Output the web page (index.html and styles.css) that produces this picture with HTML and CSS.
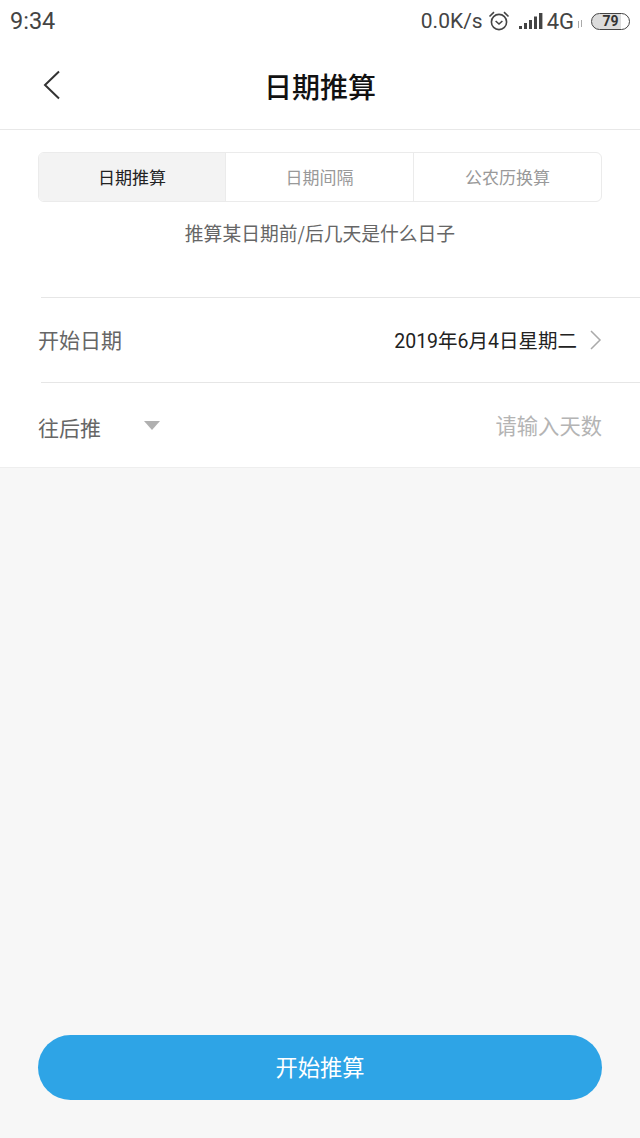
FILE: index.html
```html
<!DOCTYPE html>
<html lang="zh-CN">
<head>
    <meta charset="UTF-8">
    <meta name="viewport" content="width=device-width, initial-scale=1.0">
    <title>日期推算</title>
    <link rel="stylesheet" href="styles.css">
</head>
<body>
    <div class="page">
        <div class="status-bar">
            <span class="time">9:34</span>
            <div class="status-right">
                <span class="speed">0.0K/s</span>
                <svg class="alarm" width="22" height="22" viewBox="0 0 22 22" fill="none" stroke="#444" stroke-width="1.6">
                    <circle cx="11" cy="12" r="7.6"/>
                    <path d="M7.6 11l3.4 3 3.4-3"/>
                    <path d="M1.5 6.5L6 2.2M20.5 6.5L16 2.2"/>
                </svg>
                <svg class="signal" width="24" height="17" viewBox="0 0 24 17" fill="#444">
                    <rect x="0" y="13" width="3" height="3"/>
                    <rect x="5" y="10" width="3" height="6"/>
                    <rect x="10" y="7" width="3" height="9"/>
                    <rect x="15" y="3.5" width="3" height="12.5"/>
                    <rect x="20" y="0" width="3.4" height="16"/>
                </svg>
                <span class="net">4G</span>
                <svg class="arrows" width="6" height="8" viewBox="0 0 6 8" fill="none" stroke="#aaa" stroke-width="1">
                    <path d="M1.5 8V1M4.5 0v7"/>
                </svg>
                <div class="battery">
                    <span class="battery-level">79</span>
                </div>
            </div>
        </div>

        <header class="nav">
            <svg class="back" width="18" height="30" viewBox="0 0 18 30" fill="none" stroke="#333" stroke-width="2">
                <path d="M16 1.5L2 15l14 13.5"/>
            </svg>
            <h1>日期推算</h1>
        </header>

        <section class="panel">
            <div class="tabs">
                <div class="tab active">日期推算</div>
                <div class="tab">日期间隔</div>
                <div class="tab">公农历换算</div>
            </div>
            <p class="hint">推算某日期前/后几天是什么日子</p>

            <div class="row">
                <span class="row-label">开始日期</span>
                <div class="row-value">
                    <span class="date">2019年6月4日星期二</span>
                    <svg width="13" height="20" viewBox="0 0 13 20" fill="none" stroke="#aaa" stroke-width="1.5">
                        <path d="M2 1l9 9-9 9"/>
                    </svg>
                </div>
            </div>
            <div class="row">
                <div class="picker">
                    <span class="row-label">往后推</span>
                    <span class="caret"></span>
                </div>
                <span class="placeholder">请输入天数</span>
            </div>
        </section>

        <div class="spacer"></div>

        <div class="footer">
            <button class="submit">开始推算</button>
        </div>
    </div>
</body>
</html>
```

FILE: styles.css
```css
* {
    box-sizing: border-box;
}
body {
    margin: 0;
    font-family: "Noto Sans CJK SC", Roboto, sans-serif;
    background-color: #f7f7f7;
}
.page {
    display: flex;
    flex-direction: column;
    height: 1138px;
}
.status-bar {
    height: 42px;
    background-color: #fff;
    display: flex;
    align-items: center;
    justify-content: space-between;
    padding: 0 10px;
    color: #444;
    font-family: Roboto, sans-serif;
    font-size: 21px;
}
.time {
    font-size: 23.5px;
}
.status-right {
    display: flex;
    align-items: center;
}
.alarm {
    margin-left: 5px;
}
.signal {
    margin-left: 9px;
}
.net {
    margin-left: 4px;
    font-size: 22px;
}
.arrows {
    margin: 6px 0 0 3px;
}
.battery {
    width: 39px;
    height: 17px;
    margin-left: 8px;
    border: 1.5px solid #444;
    border-radius: 9px;
    overflow: hidden;
    background: linear-gradient(to right, #dcdcdc 79%, #fff 79%);
    display: flex;
    align-items: center;
    justify-content: center;
}
.battery-level {
    font-size: 14px;
    font-weight: 700;
    line-height: 14px;
    color: #333;
}
.nav {
    height: 88px;
    background-color: #fff;
    border-bottom: 1px solid #e8e8e8;
    display: flex;
    align-items: center;
    justify-content: center;
    position: relative;
}
.back {
    position: absolute;
    left: 43px;
    top: 28px;
}
.nav h1 {
    margin: 0;
    font-size: 28px;
    font-weight: 500;
    color: #111;
}
.panel {
    background-color: #fff;
    border-bottom: 1px solid #eeeeee;
    padding-top: 22px;
}
.tabs {
    display: flex;
    height: 50px;
    margin: 0 38px;
    border: 1px solid #ebebeb;
    border-radius: 6px;
    overflow: hidden;
}
.tab {
    flex: 1;
    display: flex;
    align-items: center;
    justify-content: center;
    padding-bottom: 2px;
    font-size: 17px;
    color: #999;
    border-right: 1px solid #ebebeb;
}
.tab:last-child {
    border-right: none;
}
.tab.active {
    flex: none;
    width: 187px;
    background-color: #f3f3f3;
    color: #222;
}
.hint {
    margin: 0;
    height: 95px;
    padding-top: 17px;
    line-height: 28px;
    text-align: center;
    font-size: 18.8px;
    color: #666;
}
.row {
    height: 85px;
    margin-left: 41px;
    padding: 0 38px 0 0;
    border-top: 1px solid #e6e6e6;
    display: flex;
    align-items: center;
    justify-content: space-between;
}
.row-label {
    margin-left: -3px;
    padding-bottom: 3px;
    font-size: 21px;
    color: #666;
}
.row-value {
    display: flex;
    align-items: center;
    gap: 12px;
}
.date {
    font-family: Roboto, "Noto Sans CJK SC", sans-serif;
    font-size: 19.5px;
    color: #222;
    padding-bottom: 2px;
}
.picker {
    display: flex;
    align-items: center;
    gap: 43px;
    padding-top: 7px;
}
.caret {
    width: 0;
    height: 0;
    margin-top: -7px;
    border-left: 8px solid transparent;
    border-right: 8px solid transparent;
    border-top: 9px solid #b0b0b0;
}
.placeholder {
    font-size: 21.3px;
    color: #b4b4b4;
    padding-bottom: 2px;
}
.spacer {
    flex: 1;
}
.footer {
    padding: 0 38px 38px;
}
.submit {
    display: block;
    width: 100%;
    height: 65px;
    padding: 0 0 4px;
    border: none;
    border-radius: 33px;
    background-color: #2ea4e6;
    color: #fff;
    font-family: inherit;
    font-size: 22.3px;
    cursor: pointer;
}
```
